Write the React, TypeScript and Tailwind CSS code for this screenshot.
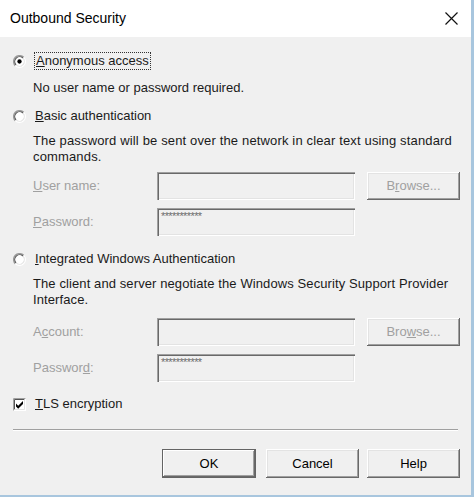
import React from "react";

const font = { fontFamily: '"Liberation Sans", Arial, sans-serif' };

function Radio({ checked }: { checked?: boolean }) {
    return (
        <svg width="13" height="13" viewBox="0 0 12 12" className="shrink-0">
            <circle cx="6" cy="6" r="5" fill="#ffffff" />
            <path d="M2.11 9.89 A5.5 5.5 0 0 1 9.89 2.11" fill="none" stroke="#9a9a9a" strokeWidth="1.1" />
            <path d="M2.82 9.18 A4.5 4.5 0 0 1 9.18 2.82" fill="none" stroke="#555555" strokeWidth="1.1" />
            <path d="M9.89 2.11 A5.5 5.5 0 0 1 2.11 9.89" fill="none" stroke="#ffffff" strokeWidth="1" />
            <path d="M9.18 2.82 A4.5 4.5 0 0 1 2.82 9.18" fill="none" stroke="#e3e3e3" strokeWidth="1" />
            {checked && <circle cx="6" cy="6" r="2" fill="#000000" />}
        </svg>
    );
}

function Checkbox() {
    return (
        <svg width="13" height="13" viewBox="0 0 13 13" className="shrink-0">
            <rect x="0" y="0" width="13" height="13" fill="#ffffff" />
            <path d="M0.5 12.5 V0.5 H12.5" fill="none" stroke="#a0a0a0" />
            <path d="M1.5 11.5 V1.5 H11.5" fill="none" stroke="#555555" />
            <path d="M1.5 11.5 H11.5 V1.5" fill="none" stroke="#e3e3e3" />
            <path d="M3 5.5 L5.2 7.8 L10 3 L10 6 L5.2 10.8 L3 8.5 Z" fill="#000000" />
        </svg>
    );
}

function Field({ masked }: { masked?: boolean }) {
    return (
        <div className="w-[198px] h-[28px] bg-[#f0f0f0] shadow-[inset_1px_1px_0_#a0a0a0,inset_2px_2px_0_#696969,inset_-1px_-1px_0_#ffffff,inset_-2px_-2px_0_#e3e3e3] pl-[4px] pt-[2px]">
            {masked && <span className="block text-[11px] leading-[12px] text-[#6d6d6d] tracking-[-0.6px]">***********</span>}
        </div>
    );
}

function Browse({ children }: { children: React.ReactNode }) {
    return (
        <div className="ml-[12px] w-[93px] h-[28px] flex items-center justify-center text-[13px] text-[#a0a0a0] bg-[#f0f0f0] shadow-[inset_-1px_-1px_0_#696969,inset_1px_1px_0_#ffffff,inset_-2px_-2px_0_#a0a0a0,inset_2px_2px_0_#e3e3e3]">
            {children}
        </div>
    );
}

function Label({ children }: { children: React.ReactNode }) {
    return <span className="w-[124px] text-[13px] text-[#a0a0a0]">{children}</span>;
}

export default function App() {
    return (
        <div
            className="w-[474px] h-[497px] flex flex-col border-r-[3px] border-b-[2px] border-[#a8c6de] bg-[#f0f0f0] text-[#1a1a1a] overflow-hidden"
            style={font}
        >
            {/* Title bar */}
            <div className="h-[37px] shrink-0 bg-white flex items-center justify-between pl-[10px] pr-[13px]">
                <span className="text-[14px] text-black">Outbound Security</span>
                <svg width="13" height="13" viewBox="0 0 13 13">
                    <path d="M0.5 0.5 L12.5 12.5 M12.5 0.5 L0.5 12.5" stroke="#111111" strokeWidth="1.2" />
                </svg>
            </div>

            <div className="flex flex-col pl-[13px] text-[13px]">
                {/* Anonymous */}
                <div className="mt-[15px] h-[18px] flex items-center">
                    <Radio checked />
                    <span className="ml-[8px] px-[1px] h-[18px] flex items-center border border-dotted border-[#333333]">
                        <u>A</u>nonymous access
                    </span>
                </div>
                <div className="mt-[10px] h-[16px] leading-[16px] pl-[20px]">No user name or password required.</div>

                {/* Basic */}
                <div className="mt-[11px] h-[18px] flex items-center">
                    <Radio />
                    <span className="ml-[9px]"><u>B</u>asic authentication</span>
                </div>
                <div className="mt-[8px] pl-[20px] pr-[14px] leading-[16px] tracking-[0.15px]">
                    The password will be sent over the network in clear text using standard commands.
                </div>
                <div className="mt-[7px] h-[28px] flex items-center pl-[20px]">
                    <Label><u>U</u>ser name:</Label>
                    <Field />
                    <Browse>B<u>r</u>owse...</Browse>
                </div>
                <div className="mt-[8px] h-[28px] flex items-center pl-[20px]">
                    <Label><u>P</u>assword:</Label>
                    <Field masked />
                </div>

                {/* Integrated */}
                <div className="mt-[14px] h-[18px] flex items-center">
                    <Radio />
                    <span className="ml-[9px]"><u>I</u>ntegrated Windows Authentication</span>
                </div>
                <div className="mt-[8px] pl-[20px] pr-[14px] leading-[16px] tracking-[0.1px]">
                    The client and server negotiate the Windows Security Support Provider Interface.
                </div>
                <div className="mt-[10px] h-[28px] flex items-center pl-[20px]">
                    <Label>A<u>c</u>count:</Label>
                    <Field />
                    <Browse>Bro<u>w</u>se...</Browse>
                </div>
                <div className="mt-[8px] h-[28px] flex items-center pl-[20px]">
                    <Label>Passwor<u>d</u>:</Label>
                    <Field masked />
                </div>

                {/* TLS */}
                <div className="mt-[13px] h-[18px] flex items-center">
                    <Checkbox />
                    <span className="ml-[9px]"><u>T</u>LS encryption</span>
                </div>

                <div className="mt-[16px] mr-[13px] h-[2px] border-t border-[#a0a0a0] border-b border-b-white" />

                {/* Buttons */}
                <div className="mt-[18px] flex justify-end pr-[11px] text-[13px] text-black">
                    <div className="w-[94px] h-[29px] flex items-center justify-center border border-[#646464] bg-[#f0f0f0] shadow-[inset_-1px_-1px_0_#696969,inset_1px_1px_0_#ffffff,inset_-2px_-2px_0_#a0a0a0]">
                        OK
                    </div>
                    <div className="ml-[10px] w-[93px] h-[29px] flex items-center justify-center bg-[#f0f0f0] shadow-[inset_-1px_-1px_0_#696969,inset_1px_1px_0_#ffffff,inset_-2px_-2px_0_#a0a0a0,inset_2px_2px_0_#e3e3e3]">
                        Cancel
                    </div>
                    <div className="ml-[8px] w-[93px] h-[29px] flex items-center justify-center bg-[#f0f0f0] shadow-[inset_-1px_-1px_0_#696969,inset_1px_1px_0_#ffffff,inset_-2px_-2px_0_#a0a0a0,inset_2px_2px_0_#e3e3e3]">
                        Help
                    </div>
                </div>
            </div>
        </div>
    );
}
